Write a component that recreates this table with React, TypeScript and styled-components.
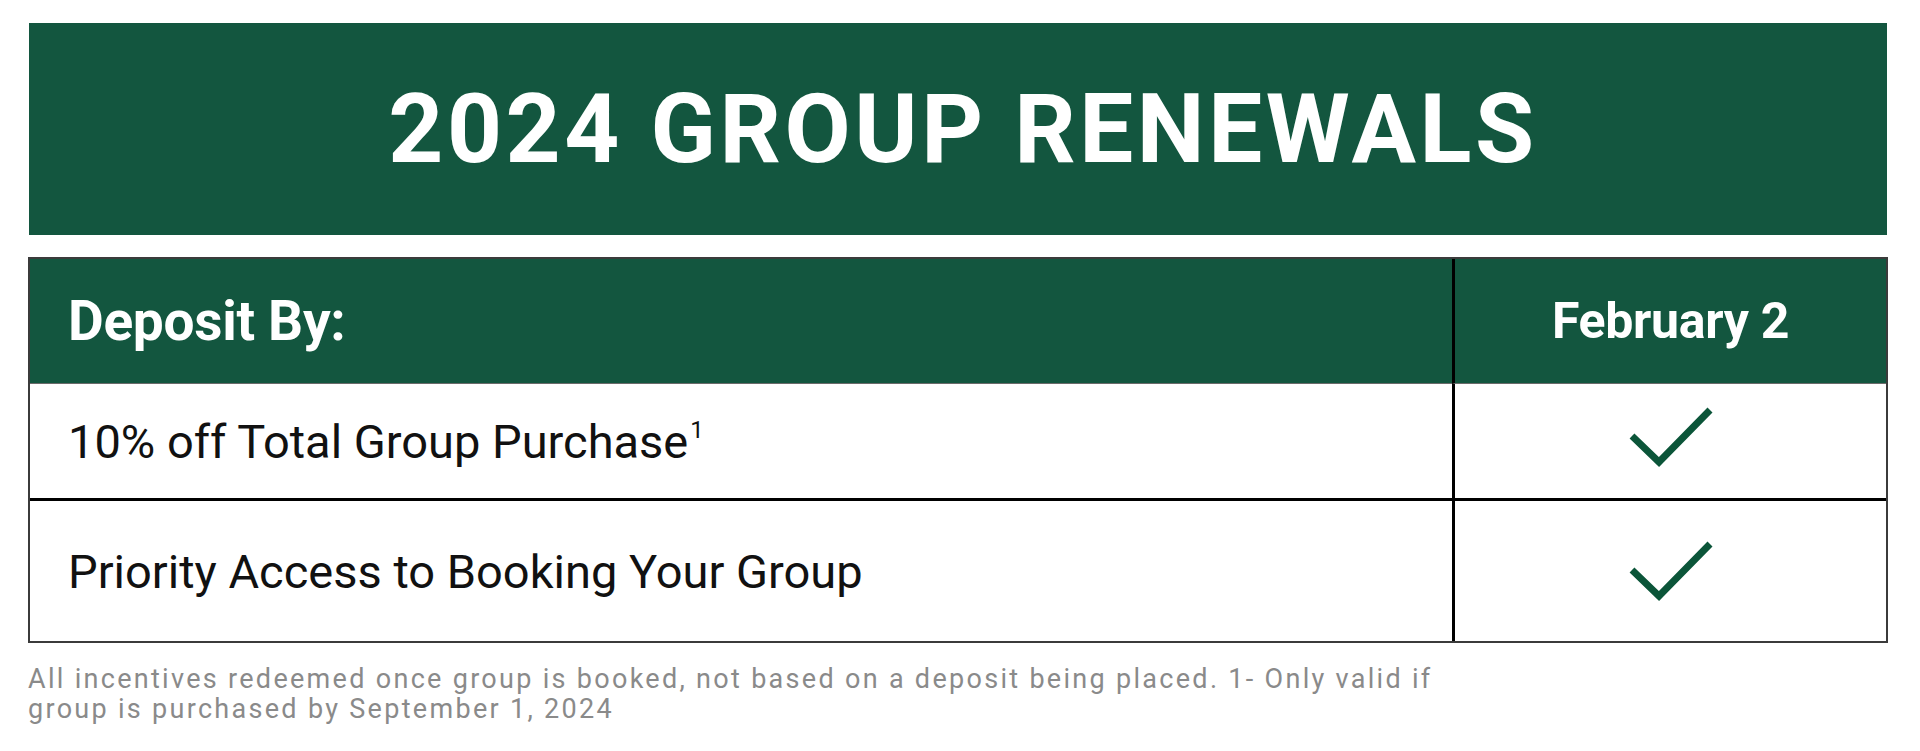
import styled, { createGlobalStyle } from 'styled-components';

const GlobalStyle = createGlobalStyle`
  html, body {
    margin: 0;
    padding: 0;
    background: #ffffff;
  }
  body {
    font-family: Roboto, "Liberation Sans", Arial, sans-serif;
  }
`

const Page = styled.div`
  width: 1860px;
  padding: 23px 32px 0 28px;
`

const Banner = styled.div`
  margin: 0 1px;
  height: 212px;
  background: #13563f;
  display: flex;
  align-items: center;
  justify-content: center;
`

const Title = styled.h1`
  margin: 0;
  padding-left: 10px;
  color: #ffffff;
  font-size: 96px;
  font-weight: 700;
  letter-spacing: 3.6px;
  line-height: 1;
`

const Table = styled.div`
  margin-top: 22px;
  border: 2px solid #3b3b3b;
  display: grid;
  grid-template-columns: 1fr 434px;
`

const Cell = styled.div<{ $head?: boolean; $right?: boolean; $h: number; $line: string }>`
  height: ${p => p.$h}px;
  background: ${p => (p.$head ? '#13563f' : '#ffffff')};
  border-bottom: ${p => p.$line};
  border-left: ${p => (p.$right ? '3px solid #000000' : 'none')};
  display: flex;
  align-items: center;
  justify-content: ${p => (p.$right ? 'center' : 'flex-start')};
  padding-left: ${p => (p.$right ? 0 : 38)}px;
`

const HeadText = styled.span<{ $size: number }>`
  color: #ffffff;
  font-size: ${p => p.$size}px;
  font-weight: 700;
  letter-spacing: -0.3px;
`

const RowText = styled.span`
  color: #111111;
  font-size: 47px;
  font-weight: 400;
  letter-spacing: 0;
`

const Sup = styled.sup`
  font-size: 24px;
  vertical-align: 20px;
  line-height: 0;
  margin-left: 2px;
`

const CheckMark = styled.svg<{ $lift: number }>`
  margin-bottom: ${p => p.$lift}px;
`

const Note = styled.p`
  margin: 21px 0 0;
  width: 1470px;
  color: #8a8a8a;
  font-size: 27px;
  line-height: 30px;
  letter-spacing: 2.3px;
`

function Check({ lift = 0 }: { lift?: number }) {
  return (
    <CheckMark $lift={lift} width="90" height="70" viewBox="0 0 90 70">
      <polyline
        points="6,34 33,60 84,8"
        fill="none"
        stroke="#0b5539"
        strokeWidth="7"
        strokeLinecap="butt"
        strokeLinejoin="miter"
      />
    </CheckMark>
  )
}

export default function App() {
  return (
    <Page>
      <GlobalStyle />
      <Banner>
        <Title>2024 GROUP RENEWALS</Title>
      </Banner>

      <Table>
        <Cell $head $h={124} $line="1px solid #6b6b6b">
          <HeadText $size={55}>Deposit By:</HeadText>
        </Cell>
        <Cell $head $right $h={124} $line="1px solid #6b6b6b">
          <HeadText $size={50}>February 2</HeadText>
        </Cell>

        <Cell $h={114} $line="3px solid #000000">
          <RowText>
            10% off Total Group Purchase<Sup>1</Sup>
          </RowText>
        </Cell>
        <Cell $right $h={114} $line="3px solid #000000">
          <Check lift={8} />
        </Cell>

        <Cell $h={140} $line="none">
          <RowText>Priority Access to Booking Your Group</RowText>
        </Cell>
        <Cell $right $h={140} $line="none">
          <Check />
        </Cell>
      </Table>

      <Note>
        All incentives redeemed once group is booked, not based on a deposit being placed. 1- Only valid if
        group is purchased by September 1, 2024
      </Note>
    </Page>
  )
}
